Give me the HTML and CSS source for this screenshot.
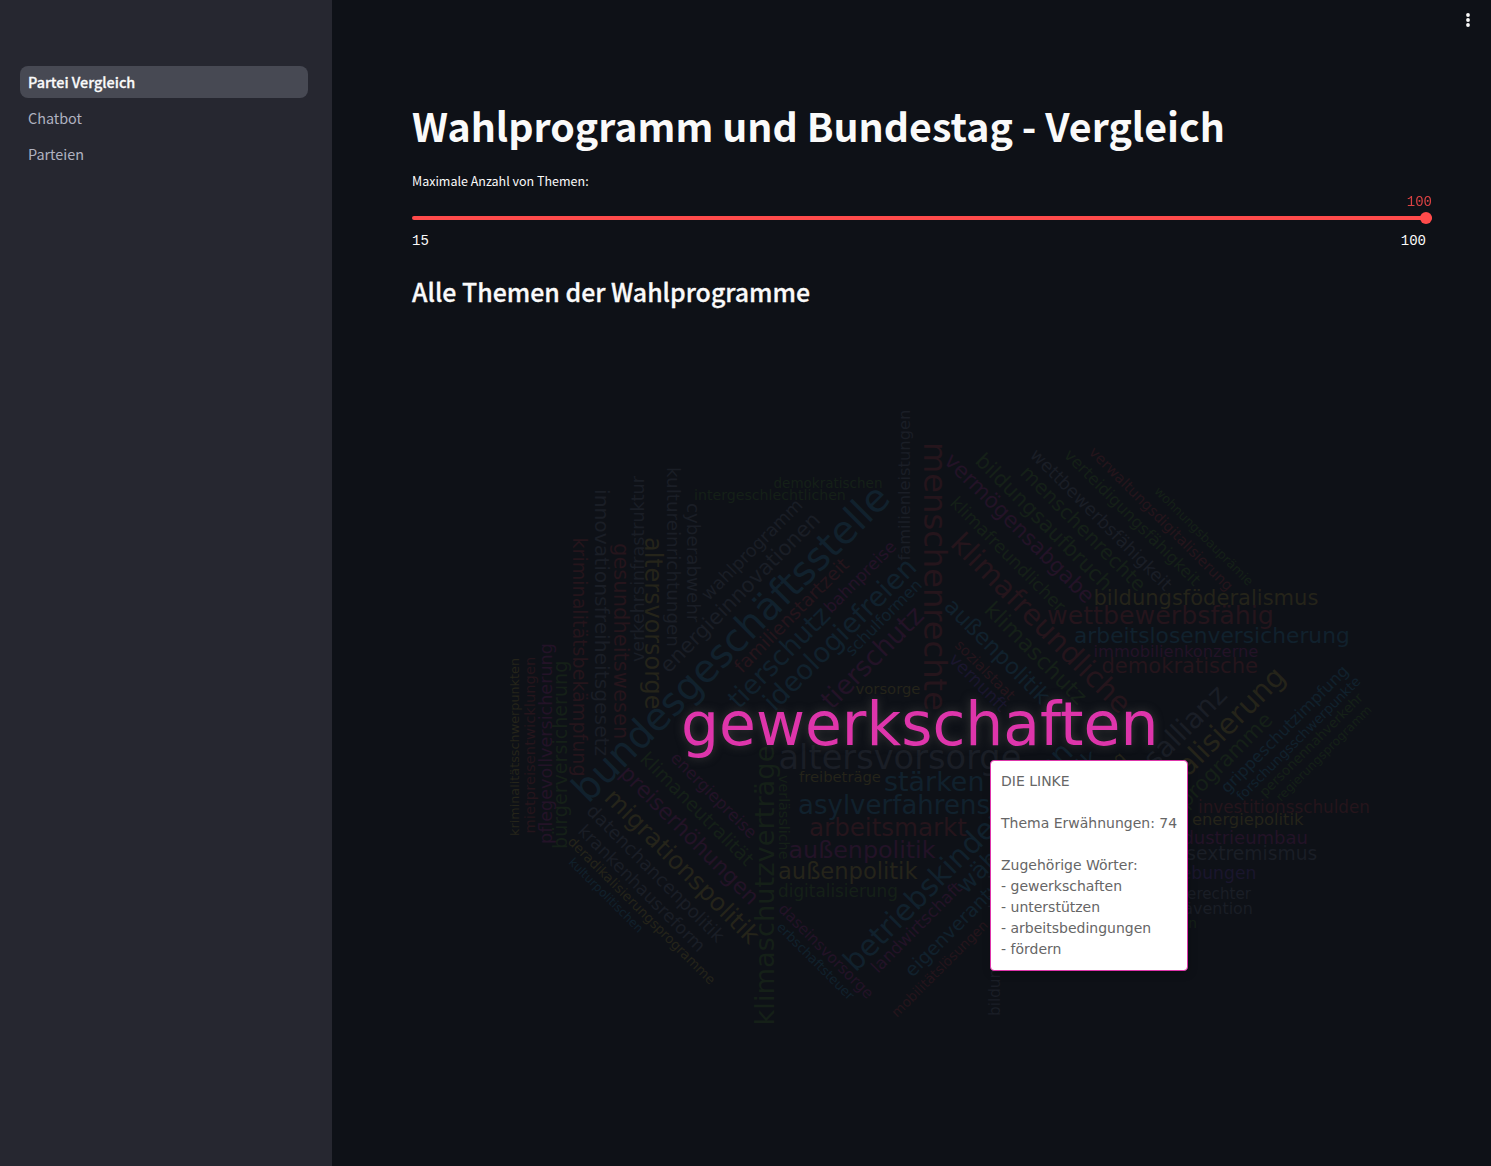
FILE: index.html
```html
<!DOCTYPE html>
<html lang="de">
<head>
<meta charset="utf-8">
<title>Partei Vergleich</title>
<link rel="stylesheet" href="styles.css">
</head>
<body>
<div class="app">
  <aside class="sidebar">
    <nav class="nav">
      <a class="nav-link active">Partei Vergleich</a>
      <a class="nav-link">Chatbot</a>
      <a class="nav-link">Parteien</a>
    </nav>
  </aside>
  <main class="main">
    <header class="toolbar">
      <svg class="menu-icon" viewBox="0 0 20 20" width="20" height="20"><circle cx="10" cy="5" r="1.9"/><circle cx="10" cy="10" r="1.9"/><circle cx="10" cy="15" r="1.9"/></svg>
    </header>
    <div class="content">
      <h1 class="title">Wahlprogramm und Bundestag - Vergleich</h1>
      <div class="slider">
        <div class="slider-label">Maximale Anzahl von Themen:</div>
        <div class="slider-value">100</div>
        <div class="slider-track"><span class="slider-thumb"></span></div>
        <div class="slider-range"><span>15</span><span>100</span></div>
      </div>
      <h2 class="subtitle">Alle Themen der Wahlprogramme</h2>
      <div class="chart">
        <svg class="cloud" id="cloud" viewBox="412 340 1020 800" width="1020" height="800"></svg>
        <div class="tooltip">
          <div>DIE LINKE</div><br>
          <div>Thema Erwähnungen: 74</div><br>
          <div>Zugehörige Wörter:</div>
          <div>- gewerkschaften</div>
          <div>- unterstützen</div>
          <div>- arbeitsbedingungen</div>
          <div>- fördern</div>
        </div>
      </div>
    </div>
  </main>
</div>
<script src="cloud.js"></script>
</body>
</html>
```
FILE: styles.css
```css
* { box-sizing: border-box; }
body {
  margin: 0;
  background: #0e1117;
  color: #fafafa;
  font-family: "Noto Sans CJK JP", "Noto Sans", sans-serif;
}
.app { display: flex; height: 1166px; overflow: hidden; }
.sidebar { width: 332px; flex: none; background: #262730; padding: 66px 24px 0 20px; }
.nav { display: flex; flex-direction: column; gap: 4px; }
.nav-link {
  height: 32px;
  padding: 0 8px;
  border-radius: 8px;
  font-size: 14.4px;
  line-height: 31px;
  color: #b0b2c0;
}
.nav-link.active { background: #474953; color: #fafafa; font-weight: 500; -webkit-text-stroke: .3px #fafafa; }
.main { flex: 1; min-width: 0; }
.toolbar { height: 60px; display: flex; justify-content: flex-end; padding: 10px 13px 0 0; }
.menu-icon { fill: #fafafa; }
.content { padding: 36px 59px 0 80px; }
.title { margin: 0; height: 76px; font-size: 39.35px; font-weight: 700; line-height: 57px; white-space: nowrap; }
.slider { height: 96px; }
.slider-label { height: 22px; font-size: 12.5px; line-height: 18px; }
.slider-value,
.slider-range { font-family: "Liberation Mono", monospace; font-size: 14px; line-height: 20px; }
.slider-value { height: 22px; line-height: 16px; text-align: right; color: #ff4b4b; opacity: .85; }
.slider-track {
  display: flex;
  align-items: center;
  justify-content: flex-end;
  height: 4px;
  border-radius: 4px;
  background: #ff4b4b;
}
.slider-thumb { width: 12px; height: 12px; border-radius: 50%; background: #ff4b4b; }
.slider-range { display: flex; justify-content: space-between; padding: 11px 6px 0 0; }
.subtitle {
  margin: 0;
  height: 72px;
  font-size: 24.9px;
  font-weight: 500;
  line-height: 46px;
  white-space: nowrap;
  -webkit-text-stroke: .3px #fafafa;
}
.chart { position: relative; height: 800px; }
.cloud { display: block; font-family: "DejaVu Sans", sans-serif; }
.focus { fill: #de35ab; filter: drop-shadow(0 0 5px #3a3a3a); }
.red { fill: #25151c; }
.grey { fill: #1a1e26; }
.yellow { fill: #25241a; }
.green { fill: #152018; }
.blue { fill: #11212d; }
.pink { fill: #231327; }
.indigo { fill: #1a162d; }
.tooltip {
  position: absolute;
  left: 578px;
  top: 420px;
  width: 198px;
  height: 211px;
  padding: 10px;
  border: 1px solid #de35ab;
  border-radius: 4px;
  background: #fff;
  box-shadow: 1px 2px 10px rgba(0, 0, 0, .2);
  color: #666;
  font: 14px/21px "DejaVu Sans", sans-serif;
  white-space: nowrap;
}
```
FILE: cloud.js
```js
// word, colour class, baseline start x, y, rotation, drawn length
const words = [
  ["demokratischen", "green", 773.5, 488, 0, 109],
  ["intergeschlechtlichen", "green", 694, 500, 0, 152],
  ["vorsorge", "yellow", 855.5, 694, 0, 65],
  ["altersvorsorge", "grey", 778.5, 769, 0, 243],
  ["freibeträge", "yellow", 799, 782, 0, 82],
  ["stärken", "blue", 884, 791, 0, 100.5],
  ["asylverfahrens", "blue", 798, 814, 0, 192],
  ["arbeitsmarkt", "red", 809, 836, 0, 158],
  ["außenpolitik", "pink", 788.5, 858, 0, 147],
  ["außenpolitik", "yellow", 778, 879, 0, 139.5],
  ["digitalisierung", "green", 778, 897, 0, 120],
  ["bildungsföderalismus", "yellow", 1093.5, 605, 0, 225],
  ["wettbewerbsfähig", "red", 1047, 624, 0, 227],
  ["arbeitslosenversicherung", "blue", 1074, 643, 0, 276],
  ["immobilienkonzerne", "pink", 1093.5, 657, 0, 165],
  ["demokratische", "red", 1101.5, 673, 0, 156.5],
  ["investitionsschulden", "red", 1198, 813, 0, 172],
  ["energiepolitik", "yellow", 1192, 825, 0, 111.5],
  ["industrieumbau", "pink", 1166, 844, 0, 142],
  ["rechtsextremismus", "grey", 1138, 860, 0, 179.5],
  ["erhebungen", "indigo", 1152.5, 879, 0, 104],
  ["gerechter", "grey", 1177.5, 899, 0, 73.5],
  ["prävention", "grey", 1166.5, 914, 0, 86.5],
  ["maßnahmen", "green", 1110, 928, 0, 87],

  ["familienleistungen", "grey", 910, 560.5, -90, 151],
  ["verkehrsinfrastruktur", "grey", 644, 662, -90, 186],
  ["kriminalitätsschwerpunkten", "yellow", 519, 836, -90, 178],
  ["mietpreisentwicklungen", "red", 535, 833.5, -90, 177],
  ["pflegevollversicherung", "pink", 552, 844, -90, 201],
  ["bürgerversicherung", "green", 567, 849, -90, 188.5],
  ["klimaschutzverträge", "green", 773.5, 1025.5, -90, 280],
  ["bildungsgerechtigkeit", "grey", 1000, 1016, -90, 165],

  ["kriminalitätsbekämpfung", "red", 573, 537.5, 90, 239],
  ["innovationsfreiheitsgesetz", "grey", 594.5, 489, 90, 267.5],
  ["gesundheitswesen", "red", 614, 543, 90, 196.5],
  ["altersvorsorge", "yellow", 645, 537, 90, 172.5],
  ["kultureinrichtungen", "grey", 667, 467, 90, 180],
  ["cyberabwehr", "grey", 686.5, 503, 90, 119.5],
  ["menschenrechte", "red", 924, 442, 90, 269],
  ["verlässliche", "green", 779, 775, 90, 84.5],

  ["bundesgeschäftsstelle", "blue", 588, 804.5, -45, 430.5],
  ["wahlprogramm", "grey", 708.5, 601.5, -45, 135],
  ["energieinnovationen", "grey", 668.5, 674, -45, 216.4],
  ["familienstartzeit", "red", 742, 674, -45, 153],
  ["tierschutz", "blue", 739, 710, -45, 131.5],
  ["bahnpreise", "pink", 831, 614, -45, 94],
  ["ideologiefreien", "blue", 774.5, 712.5, -45, 203.5],
  ["schulformen", "blue", 852, 657, -45, 100.5],
  ["tierschutz", "pink", 832, 710.5, -45, 132],
  ["betriebskindergärten", "blue", 855.5, 973, -45, 310],
  ["währungspolitik", "blue", 966, 895, -45, 191],
  ["eigenverantwortung", "blue", 912.5, 978, -45, 193],
  ["förderung", "yellow", 1070, 815, -45, 80],
  ["digitalisierung", "yellow", 1143, 822.5, -45, 204],
  ["wissensallianz", "grey", 1088, 837, -45, 199],
  ["förderprogramme", "green", 1141, 854, -45, 188],
  ["grippeschutzimpfung", "blue", 1227.5, 794, -45, 172.6],
  ["forschungsschwerpunkte", "blue", 1242, 801.5, -45, 169],
  ["personennahverkehr", "green", 1265, 797.5, -45, 140],
  ["regierungsprogramm", "green", 1281, 802, -45, 129.4],
  ["landwirtschaft", "pink", 878, 974, -45, 120],
  ["mobilitätslösungen", "red", 897, 1018, -45, 130],

  ["vermögensabgabe", "pink", 943, 462, 45, 202],
  ["bildungsaufbruch", "green", 974, 462, 45, 184],
  ["menschenrechte", "green", 1019, 474, 45, 168],
  ["wettbewerbsfähigkeit", "grey", 1029, 456, 45, 192],
  ["verteidigungsfähigkeit", "green", 1063, 456, 45, 185],
  ["verwaltungsdigitalisierung", "red", 1088, 453, 45, 196.6],
  ["wohnungsbauprämie", "green", 1153.5, 492, 45, 133.6],
  ["klimafreundlicher", "green", 949, 504, 45, 154.5],
  ["klimafreundliche", "red", 949, 545, 45, 241],
  ["außenpolitik", "blue", 943, 607.5, 45, 138.6],
  ["klimaschutz", "green", 983, 611, 45, 134],
  ["sozialstaat", "red", 954, 646, 45, 78],
  ["vernunft", "indigo", 948, 660.5, 45, 74],
  ["klimaneutralität", "green", 639, 760, 45, 151.5],
  ["energiepreise", "pink", 669.5, 759, 45, 114],
  ["preiserhöhungen", "pink", 618.5, 774.5, 45, 186],
  ["migrationspolitik", "yellow", 603, 799, 45, 207],
  ["datenchancenpolitik", "grey", 585.5, 812, 45, 186],
  ["krankenhausreform", "grey", 577, 832, 45, 171.5],
  ["deradikalisierungsprogramme", "yellow", 567, 842.5, 45, 202],
  ["kulturpolitischen", "blue", 568, 863, 45, 99.6],
  ["daseinsvorsorge", "pink", 777.5, 910, 45, 127],
  ["erbschaftsteuer", "blue", 776, 928, 45, 103],

  ["gewerkschaften", "focus", 681, 745, 0, 477.5]
];

const svg = document.getElementById("cloud");
const ctx = document.createElement("canvas").getContext("2d");
ctx.font = '100px "DejaVu Sans"';
for (const [word, colour, x, y, angle, length] of words) {
  const el = document.createElementNS("http://www.w3.org/2000/svg", "text");
  el.setAttribute("class", colour);
  el.setAttribute("transform", `translate(${x} ${y}) rotate(${angle})`);
  el.setAttribute("font-size", (100 * length / ctx.measureText(word).width).toFixed(2));
  el.textContent = word;
  svg.appendChild(el);
}
```
